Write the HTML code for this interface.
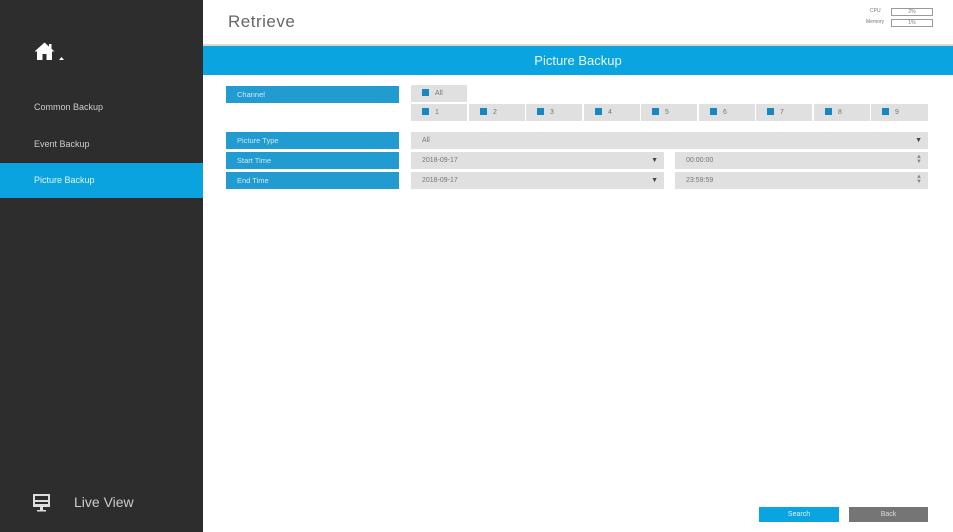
<!DOCTYPE html><html><head><style>
*{margin:0;padding:0;box-sizing:border-box}
body{width:953px;height:532px;position:relative;background:#fff;font-family:"Liberation Sans",sans-serif;overflow:hidden}
.a{position:absolute}
.side{left:0;top:0;width:203px;height:532px;background:#2d2d2d}
.item{left:0;width:203px;height:35px;color:#ccc;font-size:9px;padding-left:34px;line-height:35px}
.lab{left:226px;width:173px;height:17px;background:#229bd0;color:#cfe9f6;font-size:7.5px;line-height:17px;padding-left:11px}
.in{background:#e0e0e0;height:17px;font-size:7px;color:#777;line-height:17px;padding-left:11px}
.cb{display:inline-block;width:7px;height:7px;background:#1787bf;margin-right:6px;vertical-align:-1px}
.arr{position:absolute;right:6px;top:0;font-size:7px;color:#444}
</style></head><body>
<div class="a side"></div>
<svg class="a" style="left:34px;top:42px" width="32" height="22" viewBox="0 0 32 22"><path d="M10.5 0.5 L0.5 9.5 L3 9.5 L3 18 L8.5 18 L8.5 12 L12.5 12 L12.5 18 L18 18 L18 9.5 L20.5 9.5 Z" fill="#fff"/><rect x="15" y="2" width="2.5" height="5" fill="#fff"/><path d="M25 18 L27.5 15 L30 18Z" fill="#fff"/></svg>
<div class="a item" style="top:90px">Common Backup</div>
<div class="a item" style="top:127px">Event Backup</div>
<div class="a item" style="top:163px;background:#0aa3df;color:#e4f4fb">Picture Backup</div>
<svg class="a" style="left:32px;top:493px" width="20" height="20" viewBox="0 0 20 20"><rect x="1" y="1" width="17" height="13" fill="#ddd"/><rect x="3" y="3" width="13" height="4" fill="#2d2d2d"/><rect x="3" y="9" width="13" height="2" fill="#2d2d2d"/><rect x="8" y="14" width="3" height="3" fill="#ddd"/><rect x="5" y="17" width="9" height="1.5" fill="#ddd"/></svg>
<div class="a" style="left:74px;top:494px;color:#ccc;font-size:14px">Live View</div>
<div class="a" style="left:228px;top:12px;color:#666;font-size:17px;letter-spacing:.5px">Retrieve</div>
<div class="a" style="left:870px;top:8px;font-size:5px;color:#777">CPU</div><div class="a" style="left:891px;top:8px;width:42px;height:8px;border:1px solid #999;font-size:5px;text-align:center;color:#777">2%</div>
<div class="a" style="left:866px;top:19px;font-size:5px;color:#777">Memory</div><div class="a" style="left:891px;top:19px;width:42px;height:8px;border:1px solid #999;font-size:5px;text-align:center;color:#777">1%</div>
<div class="a" style="left:203px;top:44px;width:750px;height:2px;background:#ddd8c8"></div>
<div class="a" style="left:203px;top:46px;width:750px;height:29px;background:#0aa5e0;color:#eaf6fc;font-size:13px;text-align:center;line-height:29px">Picture Backup</div>
<div class="a lab" style="top:86px">Channel</div>
<div class="a lab" style="top:132px">Picture Type</div>
<div class="a lab" style="top:152px">Start Time</div>
<div class="a lab" style="top:172px">End Time</div>
<div class="a in" style="left:411px;top:85px;width:56px"><span class="cb"></span>All</div>
<div class="a in" style="left:411px;top:104px;width:56px"><span class="cb"></span>1</div>
<div class="a in" style="left:469px;top:104px;width:56px"><span class="cb"></span>2</div>
<div class="a in" style="left:526px;top:104px;width:56px"><span class="cb"></span>3</div>
<div class="a in" style="left:584px;top:104px;width:56px"><span class="cb"></span>4</div>
<div class="a in" style="left:641px;top:104px;width:56px"><span class="cb"></span>5</div>
<div class="a in" style="left:699px;top:104px;width:56px"><span class="cb"></span>6</div>
<div class="a in" style="left:756px;top:104px;width:56px"><span class="cb"></span>7</div>
<div class="a in" style="left:814px;top:104px;width:56px"><span class="cb"></span>8</div>
<div class="a in" style="left:871px;top:104px;width:57px"><span class="cb"></span>9</div>
<div class="a in" style="left:411px;top:132px;width:517px">All<span class="arr">▼</span></div>
<div class="a in" style="left:411px;top:152px;width:253px">2018-09-17<span class="arr">▼</span></div>
<div class="a in" style="left:411px;top:172px;width:253px">2018-09-17<span class="arr">▼</span></div>
<div class="a in" style="left:675px;top:152px;width:253px">00:00:00<span class="arr" style="font-size:6px;line-height:5px;top:3px;color:#888">▲<br>▼</span></div>
<div class="a in" style="left:675px;top:172px;width:253px">23:59:59<span class="arr" style="font-size:6px;line-height:5px;top:3px;color:#888">▲<br>▼</span></div>
<div class="a" style="left:759px;top:507px;width:80px;height:15px;background:#0aa5e0;color:#dff2fb;font-size:7px;text-align:center;line-height:15px">Search</div>
<div class="a" style="left:849px;top:507px;width:79px;height:15px;background:#757575;color:#ddd;font-size:7px;text-align:center;line-height:15px">Back</div>
</body></html>
